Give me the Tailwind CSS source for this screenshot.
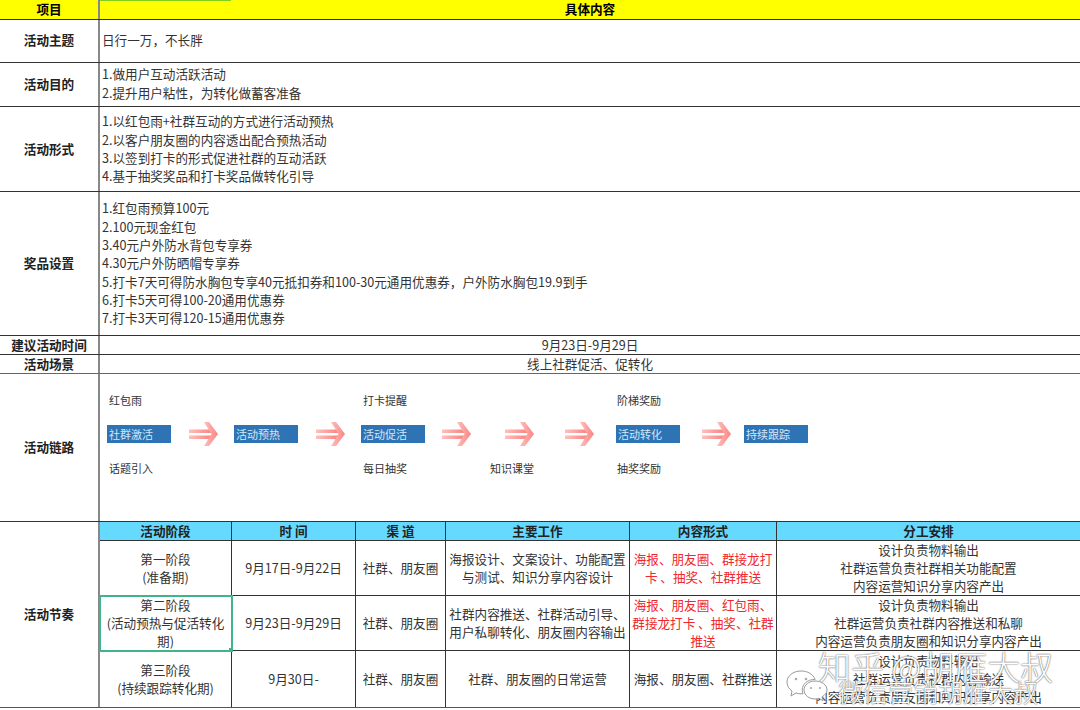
<!DOCTYPE html>
<html lang="zh-CN">
<head>
<meta charset="utf-8">
<title>活动策划表</title>
<script src="https://cdn.jsdelivr.net/npm/@tailwindcss/browser@4"></script>
</head>
<body class="bg-white">
<div class="relative w-[1080px] h-[710px] overflow-hidden bg-white text-[12.6px] leading-[18.3px] text-[#333] font-['Noto_Sans_CJK_SC','Noto_Sans',sans-serif]">

  <svg class="absolute w-0 h-0">
    <defs>
      <linearGradient id="arrowFill" x1="0" x2="1" y1="0" y2="0"><stop offset="0" stop-color="#ffc0bd"/><stop offset="1" stop-color="#f98482"/></linearGradient>
      <g id="arrow" fill="url(#arrowFill)">
        <rect x="0" y="7.500" width="22" height="3.500"/>
        <rect x="0" y="13.500" width="22" height="3.500"/>
        <path d="M15 0h5l9 12-9 12h-5l7.500-12z"/>
      </g>
    </defs>
  </svg>

  <!-- header -->
  <div class="flex h-5 border-b border-[#333] bg-[#ffff00] font-bold text-black">
    <div class="w-[100px] flex items-center justify-center border-r-2 border-[#888]">项目</div>
    <div class="relative flex-1 flex items-center justify-center">
      具体内容
      <span class="absolute left-0 top-0 w-[131px] h-px bg-[#7fd01a]"></span>
    </div>
  </div>

  <div class="flex h-[43px] border-b border-[#333]">
    <div class="w-[100px] flex items-center justify-center border-r-2 border-[#888] font-bold text-[#222] pb-px">活动主题</div>
    <div class="flex-1 flex items-center pl-[2px] pb-px">日行一万，不长胖</div>
  </div>

  <div class="flex h-[44px] border-b border-[#333]">
    <div class="w-[100px] flex items-center justify-center border-r-2 border-[#888] font-bold text-[#222] pb-px">活动目的</div>
    <div class="flex-1 flex flex-col justify-center pl-[2px] pb-[2px]">
      <p>1.做用户互动活跃活动</p>
      <p>2.提升用户粘性，为转化做蓄客准备</p>
    </div>
  </div>

  <div class="flex h-[85px] border-b border-[#333]">
    <div class="w-[100px] flex items-center justify-center border-r-2 border-[#888] font-bold text-[#222]">活动形式</div>
    <div class="flex-1 flex flex-col justify-center pl-[2px]">
      <p>1.以红包雨+社群互动的方式进行活动预热</p>
      <p>2.以客户朋友圈的内容透出配合预热活动</p>
      <p>3.以签到打卡的形式促进社群的互动活跃</p>
      <p>4.基于抽奖奖品和打卡奖品做转化引导</p>
    </div>
  </div>

  <div class="flex h-[144px] border-b border-[#333]">
    <div class="w-[100px] flex items-center justify-center border-r-2 border-[#888] font-bold text-[#222]">奖品设置</div>
    <div class="flex-1 flex flex-col justify-center pl-[2px]">
      <p>1.红包雨预算100元</p>
      <p>2.100元现金红包</p>
      <p>3.40元户外防水背包专享券</p>
      <p>4.30元户外防晒帽专享券</p>
      <p>5.打卡7天可得防水胸包专享40元抵扣券和100-30元通用优惠券，户外防水胸包19.9到手</p>
      <p>6.打卡5天可得100-20通用优惠券</p>
      <p>7.打卡3天可得120-15通用优惠券</p>
    </div>
  </div>

  <div class="flex h-[19px] border-b border-[#333]">
    <div class="w-[100px] flex items-center justify-center border-r-2 border-[#888] font-bold text-[#222] whitespace-nowrap">建议活动时间</div>
    <div class="flex-1 flex items-center justify-center">9月23日-9月29日</div>
  </div>

  <div class="flex h-[19px] border-b border-[#666]">
    <div class="w-[100px] flex items-center justify-center border-r-2 border-[#888] font-bold text-[#222]">活动场景</div>
    <div class="flex-1 flex items-center justify-center">线上社群促活、促转化</div>
  </div>

  <!-- chain -->
  <div class="flex h-[148px] border-b border-[#333]">
    <div class="w-[100px] flex items-center justify-center border-r-2 border-[#888] font-bold text-[#222]">活动链路</div>
    <div class="flex-1 pl-[7px] pt-[17px] text-[11px]">
      <div class="grid grid-cols-[254px_254px_127px] pl-[2px] h-[18px] items-center">
        <span>红包雨</span><span>打卡提醒</span><span>阶梯奖励</span>
      </div>
      <div class="flex items-center mt-[16px] h-[18px]">
        <div class="w-16 h-[18px] bg-[#2e74b5] text-[#d5e6f5] pl-[2px] flex items-center">社群激活</div>
        <svg class="w-[30px] h-[24px] ml-[18px] mr-[15px]" viewBox="0 0 30 24"><use href="#arrow"/></svg>
        <div class="w-16 h-[18px] bg-[#2e74b5] text-[#d5e6f5] pl-[2px] flex items-center">活动预热</div>
        <svg class="w-[30px] h-[24px] ml-[18px] mr-[15px]" viewBox="0 0 30 24"><use href="#arrow"/></svg>
        <div class="w-16 h-[18px] bg-[#2e74b5] text-[#d5e6f5] pl-[2px] flex items-center">活动促活</div>
        <svg class="w-[30px] h-[24px] ml-[17px]" viewBox="0 0 30 24"><use href="#arrow"/></svg>
        <svg class="w-[30px] h-[24px] ml-[33px]" viewBox="0 0 30 24"><use href="#arrow"/></svg>
        <svg class="w-[30px] h-[24px] ml-[30px] mr-[21px]" viewBox="0 0 30 24"><use href="#arrow"/></svg>
        <div class="w-16 h-[18px] bg-[#2e74b5] text-[#d5e6f5] pl-[2px] flex items-center">活动转化</div>
        <svg class="w-[30px] h-[24px] ml-[22px] mr-[12px]" viewBox="0 0 30 24"><use href="#arrow"/></svg>
        <div class="w-16 h-[18px] bg-[#2e74b5] text-[#d5e6f5] pl-[2px] flex items-center">持续跟踪</div>
      </div>
      <div class="grid grid-cols-[254px_127px_127px_127px] pl-[2px] mt-[16px] h-[18px] items-center">
        <span>话题引入</span><span>每日抽奖</span><span>知识课堂</span><span>抽奖奖励</span>
      </div>
    </div>
  </div>

  <!-- schedule -->
  <div class="flex h-[186px] border-b border-[#555]">
    <div class="w-[100px] flex items-center justify-center border-r-2 border-[#888] font-bold text-[#222]">活动节奏</div>
    <div class="flex-1 grid grid-cols-[132px_124px_90px_184px_147px_1fr] grid-rows-[19px_55px_55px_1fr] text-center">
      <div class="bg-[#66d9ff] border-r border-b border-[#333] font-bold text-[#222] flex items-center justify-center">活动阶段</div>
      <div class="bg-[#66d9ff] border-r border-b border-[#333] font-bold text-[#222] flex items-center justify-center">时 间</div>
      <div class="bg-[#66d9ff] border-r border-b border-[#333] font-bold text-[#222] flex items-center justify-center">渠 道</div>
      <div class="bg-[#66d9ff] border-r border-b border-[#333] font-bold text-[#222] flex items-center justify-center">主要工作</div>
      <div class="bg-[#66d9ff] border-r border-b border-[#333] font-bold text-[#222] flex items-center justify-center">内容形式</div>
      <div class="bg-[#66d9ff] border-b border-[#333] font-bold text-[#222] flex items-center justify-center">分工安排</div>

      <div class="border-r border-b border-[#333] flex flex-col items-center justify-center"><p>第一阶段</p><p>(准备期)</p></div>
      <div class="border-r border-b border-[#333] flex items-center justify-center">9月17日-9月22日</div>
      <div class="border-r border-b border-[#333] flex items-center justify-center">社群、朋友圈</div>
      <div class="border-r border-b border-[#333] flex items-center justify-center">海报设计、文案设计、功能配置与测试、知识分享内容设计</div>
      <div class="border-r border-b border-[#333] flex items-center justify-center text-[#f0282d] px-[3px]">海报、朋友圈、群接龙打卡 、抽奖、社群推送</div>
      <div class="border-b border-[#333] flex flex-col items-center justify-center"><p>设计负责物料输出</p><p>社群运营负责社群相关功能配置</p><p>内容运营知识分享内容产出</p></div>

      <div class="relative border-r border-b border-[#333] flex flex-col items-center justify-center outline-2 -outline-offset-1 outline-[#3fb58a] px-[6px]">
        <p>第二阶段</p><p>(活动预热与促活转化期)</p>
        <span class="absolute -right-[2px] -bottom-[2px] w-[4px] h-[4px] bg-[#3fb58a]"></span>
      </div>
      <div class="border-r border-b border-[#333] flex items-center justify-center">9月23日-9月29日</div>
      <div class="border-r border-b border-[#333] flex items-center justify-center">社群、朋友圈</div>
      <div class="border-r border-b border-[#333] flex items-center justify-center">社群内容推送、社群活动引导、用户私聊转化、朋友圈内容输出</div>
      <div class="border-r border-b border-[#333] flex items-center justify-center text-[#f0282d]">海报、朋友圈、红包雨、群接龙打卡 、抽奖、社群推送</div>
      <div class="border-b border-[#333] flex flex-col items-center justify-center"><p>设计负责物料输出</p><p>社群运营负责社群内容推送和私聊</p><p>内容运营负责朋友圈和知识分享内容产出</p></div>

      <div class="border-r border-[#333] flex flex-col items-center justify-center"><p>第三阶段</p><p>(持续跟踪转化期)</p></div>
      <div class="border-r border-[#333] flex items-center justify-center">9月30日-</div>
      <div class="border-r border-[#333] flex items-center justify-center">社群、朋友圈</div>
      <div class="border-r border-[#333] flex items-center justify-center">社群、朋友圈的日常运营</div>
      <div class="border-r border-[#333] flex items-center justify-center">海报、朋友圈、社群推送</div>
      <div class="flex flex-col items-center justify-center"><p>设计负责物料输出</p><p>社群运营负责社群内容输送</p><p>内容运营负责朋友圈和知识分享内容产出</p></div>
    </div>
  </div>

  <!-- watermark -->
  <div class="absolute left-[818px] top-[650px] text-[33px] leading-[33px] font-light text-white [text-shadow:0_0_1px_#555,0_0_2px_#888] whitespace-nowrap">知乎 @胡雁大叔</div>
  <div class="absolute left-[838px] top-[676px] text-[25px] leading-[30px] font-light text-white [text-shadow:0_0_1px_#555,0_0_2px_#888] whitespace-nowrap">微信营销胡雁大叔</div>
  <svg class="absolute left-[785px] top-[668px] w-[44px] h-[36px]" viewBox="0 0 44 36" fill="#fff" stroke="#999" stroke-width="1">
    <path d="M16 3C8 3 2 8 2 14c0 4 2 7 5 9l-1 5 5-3c2 .6 3 .8 5 .8h2c-.5-1.500-.8-2.500-.8-3.800 0-6 5.500-10.500 12-10.500h1C28 6 22.500 3 16 3z"/>
    <path d="M30 13c-6 0-11 4-11 9s5 9 11 9c1.500 0 3-.3 4-.7l4 2.500-1-4c3-1.700 5-4 5-6.800 0-5-5-9-12-9z"/>
    <circle cx="11" cy="11" r="1.300" fill="#aaa" stroke="none"/><circle cx="21" cy="11" r="1.300" fill="#aaa" stroke="none"/>
    <circle cx="26" cy="20" r="1.100" fill="#aaa" stroke="none"/><circle cx="35" cy="20" r="1.100" fill="#aaa" stroke="none"/>
  </svg>
</div>
</body>
</html>
